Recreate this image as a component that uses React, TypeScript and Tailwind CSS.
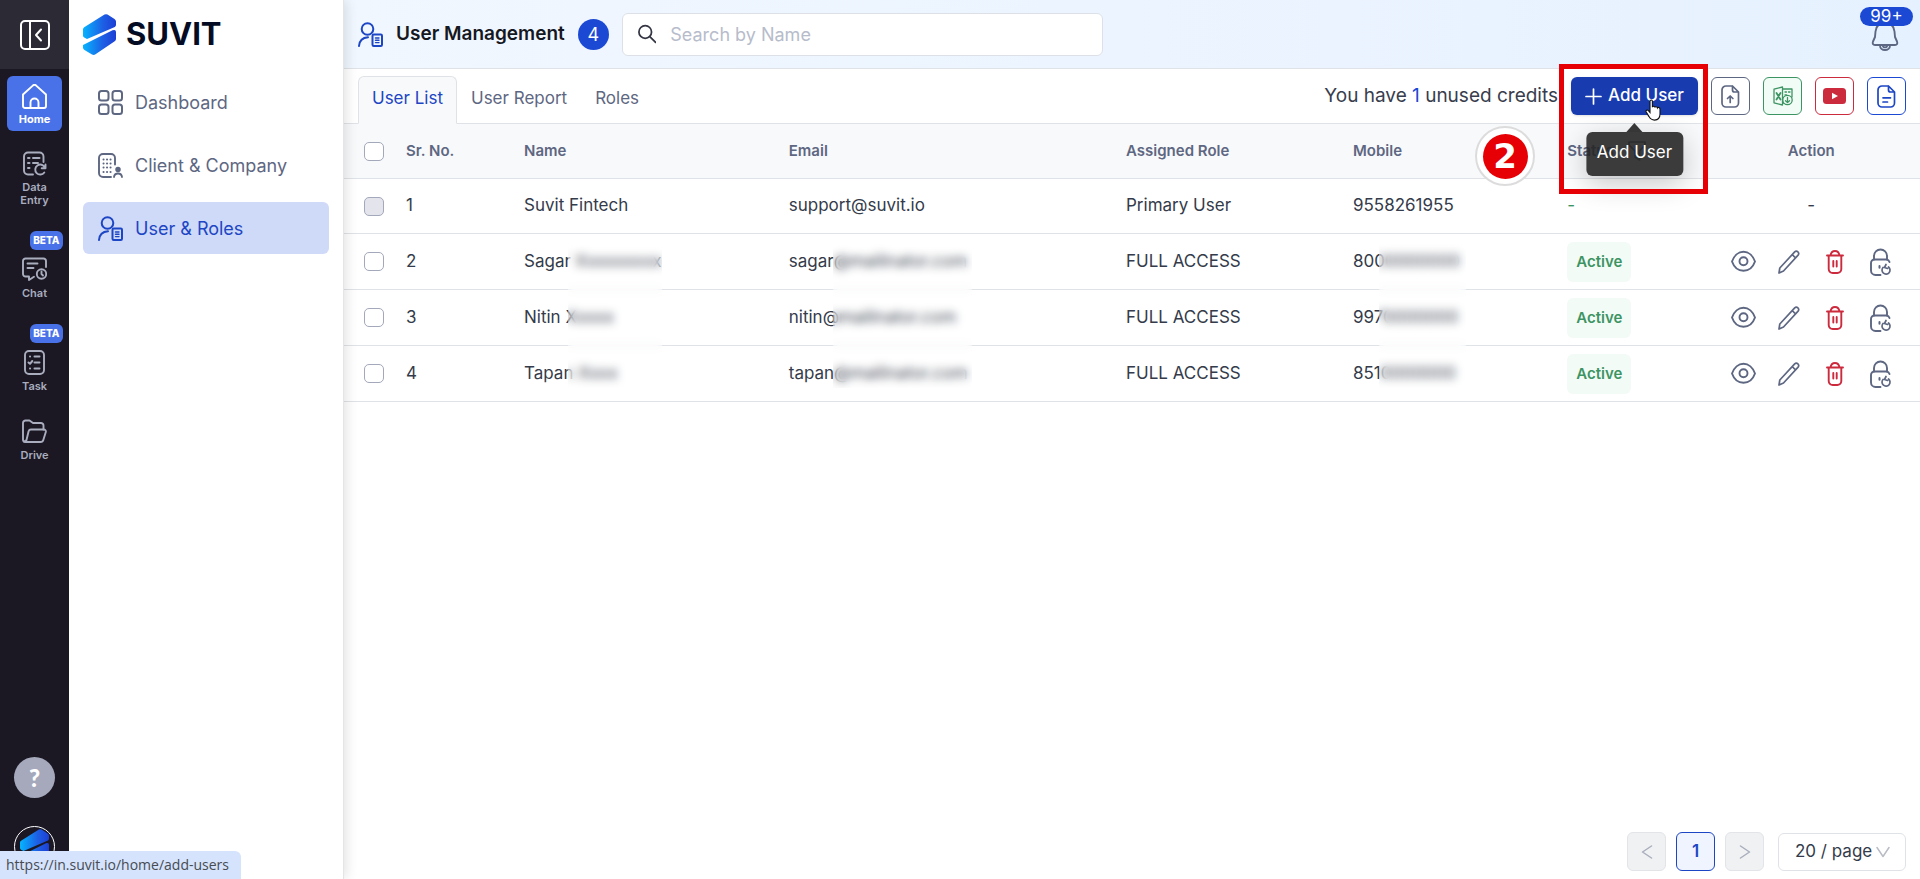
import { type ReactNode, type SVGProps } from 'react';

type IconProps = SVGProps<SVGSVGElement>;

// Base común para los iconos de trazo
function Icon({ children, ...props }: IconProps) {
  return (
    <svg
      width="25"
      height="25"
      viewBox="0 0 25 25"
      fill="none"
      stroke="currentColor"
      strokeWidth="1.7"
      strokeLinecap="round"
      strokeLinejoin="round"
      aria-hidden="true"
      {...props}
    >
      {children}
    </svg>
  );
}

const CollapseIcon = () => (
  <Icon width="30" height="30" viewBox="0 0 30 30" strokeWidth="2">
    <rect x="1" y="1" width="28" height="28" rx="4" />
    <path d="M10 1v28M21 9.5l-5 5.5 5 5.5" />
  </Icon>
);

const HomeIcon = () => (
  <Icon strokeWidth="1.9">
    <path d="M1 10.5 10.8 1.6a2.5 2.5 0 0 1 3.4 0L24 10.5V22a2 2 0 0 1-2 2H3a2 2 0 0 1-2-2V10.5Z" />
    <path d="M8.5 24v-5.500a4 4 0 0 1 8 0V24" />
  </Icon>
);

const DataEntryIcon = () => (
  <Icon strokeWidth="1.9">
    <path d="M21.5 11V5.500a4 4 0 0 0-4-4H6a4 4 0 0 0-4 4v14a4 4 0 0 0 4 4h5" />
    <path d="M6 7h1.500M11 7h6.500M6 12h1.500M11 12h5M6 17h1.500" strokeWidth="2" />
    <path d="M22.800 16.500a5 5 0 1 0-.5 5M23.500 13.500v3.800h-3.800" />
  </Icon>
);

const ChatIcon = () => (
  <Icon strokeWidth="1.9">
    <path d="M24 10V4a2.500 2.500 0 0 0-2.500-2.500h-18A2.500 2.500 0 0 0 1 4v13a2.500 2.500 0 0 0 2.500 2.500H7V23l5-3.200" />
    <path d="M5.500 6.500h10M5.500 11h6" />
    <circle cx="19.500" cy="17" r="4.700" />
    <path d="M19.500 14.500V17l1.500 1.500" />
  </Icon>
);

const TaskIcon = () => (
  <Icon strokeWidth="1.9">
    <rect x="3" y="1" width="19" height="23" rx="4" />
    <path d="M8 6.500h.1M12.500 6.500h5M12.500 12.500h5M8 18.500h.1M12.500 18.500h5M6.500 12.500l1.500 1.300 2.300-2.800" strokeWidth="2" />
  </Icon>
);

const DriveIcon = () => (
  <Icon strokeWidth="1.9">
    <path d="M3.500 23A2.500 2.500 0 0 1 1 20.500V4a2.500 2.500 0 0 1 2.500-2.500h4L11 4h8a2.500 2.500 0 0 1 2.500 2.500v4" />
    <path d="M3.500 23h15a3 3 0 0 0 2.900-2.300l2.400-7.700a2 2 0 0 0-2-2.500H9a2.500 2.500 0 0 0-2.400 1.800L4.500 21a2.500 2.500 0 0 1-2.500 1.500" />
  </Icon>
);

const DashboardIcon = () => (
  <Icon strokeWidth="2">
    <rect x="1" y="1" width="9.500" height="9.500" rx="2.500" />
    <rect x="14.500" y="1" width="9.500" height="9.500" rx="2.500" />
    <rect x="1" y="14.500" width="9.500" height="9.500" rx="2.500" />
    <rect x="14.500" y="14.500" width="9.500" height="9.500" rx="2.500" />
  </Icon>
);

const CompanyIcon = () => (
  <Icon strokeWidth="1.9">
    <path d="M17 11.500V5a4 4 0 0 0-4-4H5a4 4 0 0 0-4 4v15a4 4 0 0 0 4 4h8" />
    <path d="M5.500 6.500h.1M9 6.500h.1M12.500 6.500h.1M5.500 10.500h.1M9 10.500h.1M12.500 10.500h.1M5.500 14.500h.1M9 14.500h.1M12.500 14.500h.1M5.500 19h.1M9 19h.1M12.500 19h.1" strokeWidth="2" />
    <circle cx="20" cy="16.500" r="1.800" fill="currentColor" />
    <path d="M16 24c.3-2.500 1.800-3.500 4-3.500s3.700 1 4 3.500" />
  </Icon>
);

const UserRolesIcon = () => (
  <Icon strokeWidth="2">
    <circle cx="9.500" cy="7" r="5.800" />
    <path d="M1 24c.4-5 3.500-8.500 9-8.800" />
    <rect x="14.500" y="12.500" width="9.500" height="11.500" rx="1.200" />
    <path d="M17.500 16h3.500M17.500 18.300h3.500M17.500 20.600h3.500" strokeWidth="1.400" />
  </Icon>
);

const SearchIcon = () => (
  <Icon width="20" height="20" viewBox="0 0 20 20" strokeWidth="1.900">
    <circle cx="7.800" cy="7.800" r="6.800" />
    <path d="m13 13 6 6" />
  </Icon>
);

const BellIcon = () => (
  <Icon width="28" height="30" viewBox="0 0 28 30" strokeWidth="1.9">
    <path d="M14 2C8 2 5 5.500 4.500 10.500L4 16l-2 4.500c-.8 2 0 3.500 2 3.500h20c2 0 2.800-1.500 2-3.500L24 16l-.5-5.500C23 5.500 20 2 14 2Z" />
    <path d="M9 24.500a5 4.500 0 0 0 10 0" />
    <path d="M12 25.500a2.200 1.500 0 0 0 4 0" />
  </Icon>
);

const FILE_PATH =
  'M11.500 1H5a4 4 0 0 0-4 4v13a4 4 0 0 0 4 4h8.500a4 4 0 0 0 4-4V7L11.500 1v4a2 2 0 0 0 2 2h4';

const UploadFileIcon = () => (
  <Icon width="19" height="23" viewBox="0 0 19 23">
    <path d={FILE_PATH} />
    <path d="M9.200 17.500v-6M6.500 13.500l2.700-2.500 2.700 2.500" />
  </Icon>
);

const DocIcon = () => (
  <Icon width="19" height="23" viewBox="0 0 19 23">
    <path d={FILE_PATH} />
    <path d="M6 12.800h7.500M6 17h4.500" />
  </Icon>
);

const ExcelIcon = () => (
  <Icon width="20" height="20" viewBox="0 0 20 20" strokeWidth="1.300">
    <path d="M1 3.200 9.500 1v18L1 16.800V3.200ZM9.500 3H19v8M9.500 17h2" />
    <path d="M12 6h1.500M15.500 6H17M12 9h1.500" />
    <path d="m3.500 7 4 6.500M7.500 7l-4 6.500" strokeWidth="1.800" />
    <circle cx="14.500" cy="14" r="4.700" fill="#f2fcf6" />
    <path d="M14.500 11.500v5M12.500 14.700l2 1.900 2-1.900" />
  </Icon>
);

const YoutubeIcon = () => (
  <svg width="23" height="16" viewBox="0 0 23 16" aria-hidden="true">
    <rect width="23" height="16" rx="3.500" fill="#cc2a3d" />
    <path d="m9 4.800 6 3.200-6 3.200V4.800Z" fill="#fff" />
  </svg>
);

const EyeIcon = () => (
  <Icon strokeWidth="1.9">
    <path d="M1 12.500C3 6.800 7.500 2.800 12.500 2.800S22 6.800 24 12.500c-2 5.700-6.500 9.200-11.500 9.200S3 18.200 1 12.500Z" />
    <circle cx="12.500" cy="12.300" r="4" />
  </Icon>
);

const PencilIcon = () => (
  <Icon width="22" height="24" viewBox="0 0 22 24">
    <path d="m1 23 .8-5L16.700 1.900a2.300 2.300 0 0 1 3.200 0 2.500 2.500 0 0 1 .2 3.300L5.500 21 1 23ZM14.300 4.600l3.300 3.400" />
  </Icon>
);

const TrashIcon = () => (
  <Icon width="18" height="24" viewBox="0 0 18 24" strokeWidth="1.9">
    <path d="M1 5.500h16M2.700 5.500V19a4 4 0 0 0 4 4h4.600a4 4 0 0 0 4-4V5.500M4.500 5.500C5 2.500 6 1 9 1s4 1.500 4.500 4.500M7.300 11v5.500M10.700 11v5.500" />
  </Icon>
);

const LockIcon = () => (
  <Icon width="22" height="28" viewBox="0 0 22 28" strokeWidth="1.9">
    <path d="M4 11.500V8a6.500 6.500 0 0 1 13 0v3.500" />
    <path d="M19.500 14a3.500 3.500 0 0 0-3-2.500H4.500A3.500 3.500 0 0 0 1 15v7.500A4.500 4.500 0 0 0 5.500 27h5" />
    <path d="M9.500 18v1.800" strokeWidth="2" />
    <path d="M13 19.500a4 4 0 1 0 5.500-.5M16 16.500l-1.500 3 3 1" strokeWidth="1.700" />
  </Icon>
);

const FilterIcon = () => (
  <Icon width="18" height="20" viewBox="0 0 18 20">
    <path d="M1 1h16v3l-5.500 6v9L7 16v-6L1 4V1Z" />
  </Icon>
);

const Chevron = ({ d }: { d: string }) => (
  <Icon width="14" height="14" viewBox="0 0 14 14" strokeWidth="1.500">
    <path d={d} />
  </Icon>
);

function LogoMark(props: IconProps) {
  return (
    <svg width="33" height="41" viewBox="0 0 33 41" aria-hidden="true" {...props}>
      <defs>
        <linearGradient id="suvit" x1="0" x2="1" y1="0" y2="0">
          <stop offset="0" stopColor="#05b4ff" />
          <stop offset=".6" stopColor="#1d5fe4" />
          <stop offset="1" stopColor="#1d3fd4" />
        </linearGradient>
      </defs>
      <path
        d="M0 15.500q0-1.500 1.200-2.200L21.500.6q1.500-.9 3 0L31.500 5q1.500 1 1.500 2.500V11q0 1.200-1.200 2L4 25 1.200 23.500Q0 22.800 0 21.500Z"
        fill="url(#suvit)"
      />
      <path
        d="M0 31 29.500 16.300Q33 15 33 18v7q0 1.500-1.300 2.300L12.500 40.300q-1.800 1.200-3.500.2L1.500 36Q0 35 0 33.500Z"
        fill="url(#suvit)"
      />
    </svg>
  );
}

interface RailItemProps {
  label: string;
  icon: ReactNode;
  beta?: boolean;
}

function RailItem({ label, icon, beta }: RailItemProps) {
  return (
    <a href="#" className="relative flex w-14 flex-col items-center gap-[5px] text-[#a9adbe]">
      {beta && (
        <span className="absolute -top-[26px] right-0 rounded-md bg-[#4a72e8] px-[3px] text-[10px] leading-[19px] font-extrabold text-white">
          BETA
        </span>
      )}
      {icon}
      <span className="px-2 text-center text-[11px] leading-[13px] font-semibold">{label}</span>
    </a>
  );
}

function Rail() {
  return (
    <aside className="flex h-screen w-[69px] shrink-0 flex-col items-center bg-[#1b1824]">
      <button type="button" aria-label="Collapse menu" className="flex h-[69px] w-full shrink-0 items-center justify-center bg-[#2c2a35] text-white">
        <CollapseIcon />
      </button>
      <a href="#" className="mt-[7px] flex h-[55px] w-[55px] shrink-0 flex-col items-center justify-end gap-1 rounded-md bg-[#4a72e8] pb-[5px] text-white">
        <HomeIcon />
        <span className="text-[11px] leading-[13px] font-bold">Home</span>
      </a>
      <nav className="flex flex-col pt-5">
        <RailItem label="Data Entry" icon={<DataEntryIcon />} />
        <div className="pt-[50px]">
          <RailItem label="Chat" icon={<ChatIcon />} beta />
        </div>
        <div className="pt-[50px]">
          <RailItem label="Task" icon={<TaskIcon />} beta />
        </div>
        <div className="pt-[26px]">
          <RailItem label="Drive" icon={<DriveIcon />} />
        </div>
      </nav>
      <div className="mt-auto flex flex-col items-center gap-7 pb-3">
        <button type="button" aria-label="Help" className="h-[41px] w-[41px] rounded-full bg-[#a5a9bb] font-[Lato] text-2xl font-black text-white">
          ?
        </button>
        <span className="flex h-[41px] w-[41px] items-center justify-center overflow-hidden rounded-full border border-white">
          <LogoMark width="29" height="36" />
        </span>
      </div>
    </aside>
  );
}

const menu = [
  { label: 'Dashboard', icon: <DashboardIcon />, active: false },
  { label: 'Client & Company', icon: <CompanyIcon />, active: false },
  { label: 'User & Roles', icon: <UserRolesIcon />, active: true },
];

function SidePanel() {
  return (
    <aside className="z-20 w-[275px] shrink-0 border-r border-[#e4e5e9] bg-white px-3.5 shadow-[2px_0_12px_rgba(0,0,0,0.12)]">
      <div className="flex h-[69px] items-center gap-2.5">
        <LogoMark />
        <span className="text-[31px] font-bold text-[#040c24]">SUVIT</span>
      </div>
      <nav className="flex flex-col gap-[11px] pt-[7px]">
        {menu.map((item) => (
          <a
            key={item.label}
            href="#"
            className={`flex h-[52px] items-center gap-3 rounded-md px-[15px] text-[18px] ${
              item.active ? 'bg-[#cfd9f8] text-[#1d46c4]' : 'text-[#5e6782]'
            }`}
          >
            {item.icon}
            {item.label}
          </a>
        ))}
      </nav>
    </aside>
  );
}

function Header() {
  return (
    <header className="flex h-[69px] items-center border-b border-[#dfe2e6] bg-linear-to-r from-[#f1f7ff] to-[#e6f1ff] px-3.5">
      <span className="text-[#1d46c4]">
        <UserRolesIcon />
      </span>
      <h1 className="ml-[13px] text-[19px] font-semibold text-[#16181f]">User Management</h1>
      <span className="ml-[13px] flex h-[31px] w-[31px] items-center justify-center rounded-full bg-[#1c49d4] text-[18px] text-white">
        4
      </span>
      <label className="ml-[13px] flex h-[43px] w-[481px] items-center gap-3.5 rounded-md border border-[#dde1e7] bg-white px-[15px] text-[#333642]">
        <SearchIcon />
        <input
          type="search"
          aria-label="Search by Name"
          placeholder="Search by Name"
          className="w-full text-[18px] outline-none placeholder:text-[#b7bccb]"
        />
      </label>
      <button type="button" aria-label="Notifications" className="relative mt-1 mr-[7px] ml-auto text-[#5e6782]">
        <BellIcon />
        <span className="absolute -top-3.5 -right-3.5 w-[53px] rounded-full bg-[#1c49d4] text-center text-[17px] leading-[19px] text-white">
          99+
        </span>
      </button>
    </header>
  );
}

function Tooltip({ children }: { children: ReactNode }) {
  return (
    <span
      role="tooltip"
      className="absolute top-[46px] left-1/2 z-20 flex -translate-x-1/2 flex-col items-center text-[17px] whitespace-nowrap text-white"
    >
      <span className="h-0 w-0 border-x-8 border-b-[9px] border-x-transparent border-b-[#3a3a3a]" />
      <span className="rounded-md bg-[#262626]/90 px-[11px] pt-2 pb-3 leading-6 shadow-[0_8px_28px_rgba(0,0,0,0.22)]">
        {children}
      </span>
    </span>
  );
}

const HandCursor = () => (
  <svg width="17" height="22" viewBox="0 0 17 22" className="absolute top-[22px] left-[74px] z-30" aria-hidden="true">
    <path
      d="M5 2.200c0-1.600 2.400-1.600 2.400 0v6c.2-1.300 2.400-1.200 2.500.2.300-1 2.300-.9 2.500.5.500-.9 2.600-.5 2.600 1.200v5c0 3.500-1.500 6-5.500 6-3 0-4.200-1.200-5.500-3.500L1.200 13c-.8-1.500 1-2.700 2.200-1.400L5 13.500V2.200Z"
      fill="#fff"
      stroke="#111"
      strokeWidth="1.100"
    />
  </svg>
);

const tabs = ['User List', 'User Report', 'Roles'];

const toolButton = 'flex h-[38px] w-[39px] items-center justify-center rounded-md border';

function Toolbar() {
  return (
    <div className="flex h-[55px] items-start justify-between border-b border-[#dfe2e6] px-3.5 pt-[7px]">
      <div role="tablist" className="flex h-12">
        {tabs.map((tab, i) => (
          <button
            key={tab}
            type="button"
            role="tab"
            aria-selected={i === 0}
            className={`rounded-t-md border px-[13px] pb-0.5 text-[17px] ${
              i === 0
                ? 'border-[#dfe2e6] border-b-[#f8f9fb] bg-[#f8f9fb] text-[#1d46c4]'
                : 'border-transparent text-[#5e6782]'
            }`}
          >
            {tab}
          </button>
        ))}
      </div>
      <div className="flex items-center gap-[13px] pt-px">
        <p className="text-[19px] text-[#383d4d]">
          You have <span className="text-[#1c49d4]">1</span> unused credits
        </p>
        <div className="relative">
          <button type="button" className="flex h-[38px] w-[127px] items-center justify-center gap-1.5 rounded-md bg-[#183cb0] text-[17px] font-medium text-white shadow-sm">
            <Icon width="17" height="17" viewBox="0 0 17 17">
              <path d="M8.500 1v15M1 8.500h15" />
            </Icon>
            Add User
          </button>
          <HandCursor />
          <Tooltip>Add User</Tooltip>
          <span className="absolute -top-[13px] -left-3 z-30 h-[130px] w-[149px] border-[5px] border-[#e60005]" />
          <span className="absolute top-[49px] -left-24 z-30 flex h-[60px] w-[60px] items-center justify-center rounded-full border-2 border-[#dcdcdc] bg-white">
            <span className="flex h-[45px] w-[45px] items-center justify-center rounded-full bg-[#e60005] font-['DejaVu_Sans'] text-[34px] font-bold text-white">
              2
            </span>
          </span>
        </div>
        <button type="button" aria-label="Upload file" className={`${toolButton} border-[#5e6782] text-[#5e6782]`}>
          <UploadFileIcon />
        </button>
        <button type="button" aria-label="Export to Excel" className={`${toolButton} border-[#3d9463] bg-[#f2fcf6] text-[#3d9463]`}>
          <ExcelIcon />
        </button>
        <button type="button" aria-label="Watch video" className={`${toolButton} border-[#cc2a3d]`}>
          <YoutubeIcon />
        </button>
        <button type="button" aria-label="Documentation" className={`${toolButton} border-[#1c49d4] text-[#1d46c4]`}>
          <DocIcon />
        </button>
      </div>
    </div>
  );
}

interface User {
  name: string;
  email: string;
  role: string;
  mobile: string;
  active: boolean;
}

const users: User[] = [
  { name: 'Suvit Fintech', email: 'support@suvit.io', role: 'Primary User', mobile: '9558261955', active: false },
  { name: 'Sagar Xxxxxxxxx', email: 'sagar@mailinator.com', role: 'FULL ACCESS', mobile: '8000000000', active: true },
  { name: 'Nitin Xxxxx', email: 'nitin@mailinator.com', role: 'FULL ACCESS', mobile: '9970000000', active: true },
  { name: 'Tapan Xxxx', email: 'tapan@mailinator.com', role: 'FULL ACCESS', mobile: '8510000000', active: true },
];

// Oculta los datos privados de las tres filas de usuarios
function PrivacyMask({ className }: { className: string }) {
  return <span className={`absolute top-2 z-10 h-[146px] bg-white/10 backdrop-blur-[4px] ${className}`} />;
}

const checkbox =
  'block h-[19px] w-5 appearance-none rounded-[5px] border border-[#a3a8ba] bg-white disabled:bg-[#e3e4ec]';

function UserRow({ user, index }: { user: User; index: number }) {
  const masked = index === 1;
  const cell = 'relative border-b border-[#dfe2e6] px-4';

  return (
    <tr className={index === 0 ? 'h-[55px]' : 'h-14'}>
      <td className="border-b border-[#dfe2e6] pl-5">
        <input type="checkbox" aria-label={`Select ${user.name}`} disabled={index === 0} className={checkbox} />
      </td>
      <td className={cell}>{index + 1}</td>
      <td className={cell}>
        {user.name}
        {masked && <PrivacyMask className="left-[60px] w-[94px]" />}
      </td>
      <td className={cell}>
        {user.email}
        {masked && <PrivacyMask className="left-[60px] w-[139px]" />}
      </td>
      <td className={cell}>{user.role}</td>
      <td className={cell}>
        {user.mobile}
        {masked && <PrivacyMask className="left-[42px] w-[87px]" />}
      </td>
      <td className={`${cell} text-[#3d9463]`}>
        {user.active ? (
          <span className="inline-block rounded-md bg-[#f3fbf7] px-[9px] text-[15px] leading-10 font-semibold">Active</span>
        ) : (
          '-'
        )}
      </td>
      <td className={cell}>
        {user.active ? (
          <div className="flex items-center justify-center gap-[22px] pl-px text-[#5e6782]">
            <button type="button" aria-label="View">
              <EyeIcon />
            </button>
            <button type="button" aria-label="Edit">
              <PencilIcon />
            </button>
            <button type="button" aria-label="Delete" className="px-1 text-[#cc2a3d]">
              <TrashIcon />
            </button>
            <button type="button" aria-label="Reset password">
              <LockIcon />
            </button>
          </div>
        ) : (
          <div className="text-center">-</div>
        )}
      </td>
    </tr>
  );
}

function UserTable() {
  return (
    <table className="w-full table-fixed border-separate border-spacing-0 text-left text-[17px] text-[#343b4a]">
      <colgroup>
        <col className="w-[46px]" />
        <col className="w-[118px]" />
        <col className="w-[16.8%]" />
        <col className="w-[21.4%]" />
        <col className="w-[14.4%]" />
        <col className="w-[13.6%]" />
        <col className="w-[9.6%]" />
        <col />
      </colgroup>
      <thead>
        <tr className="h-[55px] bg-[#f8f9fb] text-[15px] text-[#5e6782] *:border-b *:border-[#dfe2e6] *:px-4 *:font-semibold">
          <td className="pr-0! pl-5!">
            <input type="checkbox" aria-label="Select all" className={checkbox} />
          </td>
          <th>Sr. No.</th>
          <th>Name</th>
          <th>Email</th>
          <th>Assigned Role</th>
          <th>Mobile</th>
          <th>
            <span className="flex items-center gap-3.5">
              Status
              <FilterIcon />
            </span>
          </th>
          <th className="text-center">Action</th>
        </tr>
      </thead>
      <tbody>
        {users.map((user, i) => (
          <UserRow key={user.name} user={user} index={i} />
        ))}
      </tbody>
    </table>
  );
}

const pageButton = 'flex h-[39px] w-[39px] items-center justify-center rounded-md border';

function Pagination() {
  return (
    <div className="mt-auto flex items-center justify-end px-3.5 pb-2 text-[#343b4a]">
      <button type="button" aria-label="Previous page" disabled className={`${pageButton} border-[#e2e4e8] bg-[#f0f1f2] text-[#a9adbe]`}>
        <Chevron d="M11.500 1 2.500 7l9 6" />
      </button>
      <button type="button" className={`${pageButton} mx-2.5 border-[#1d46c4] bg-[#eff4ff] text-[17px] font-semibold text-[#1d46c4]`}>
        1
      </button>
      <button type="button" aria-label="Next page" disabled className={`${pageButton} border-[#e2e4e8] bg-[#f0f1f2] text-[#a9adbe]`}>
        <Chevron d="m2.500 1 9 6-9 6" />
      </button>
      <div className="relative ml-3.5 flex items-center">
        <select aria-label="Page size" className="h-[38px] w-32 appearance-none rounded-md border border-[#dfe2e6] bg-white pl-4 text-[17px]">
          <option>20 / page</option>
        </select>
        <span className="pointer-events-none absolute right-4 text-[#b9bcc6]">
          <Chevron d="m1 2.500 6 9 6-9" />
        </span>
      </div>
    </div>
  );
}

export default function App() {
  return (
    <div className="flex min-h-screen bg-white font-[Inter,sans-serif]">
      <Rail />
      <SidePanel />
      <main className="flex min-w-0 flex-1 flex-col">
        <Header />
        <Toolbar />
        <UserTable />
        <Pagination />
      </main>
      <div className="fixed bottom-0 left-0 z-40 rounded-tr-md bg-[#d5e3fc] pr-3 pl-1.5 font-['Open_Sans',sans-serif] text-[14px] leading-7 text-[#474b52]">
        https://in.suvit.io/home/add-users
      </div>
    </div>
  );
}
